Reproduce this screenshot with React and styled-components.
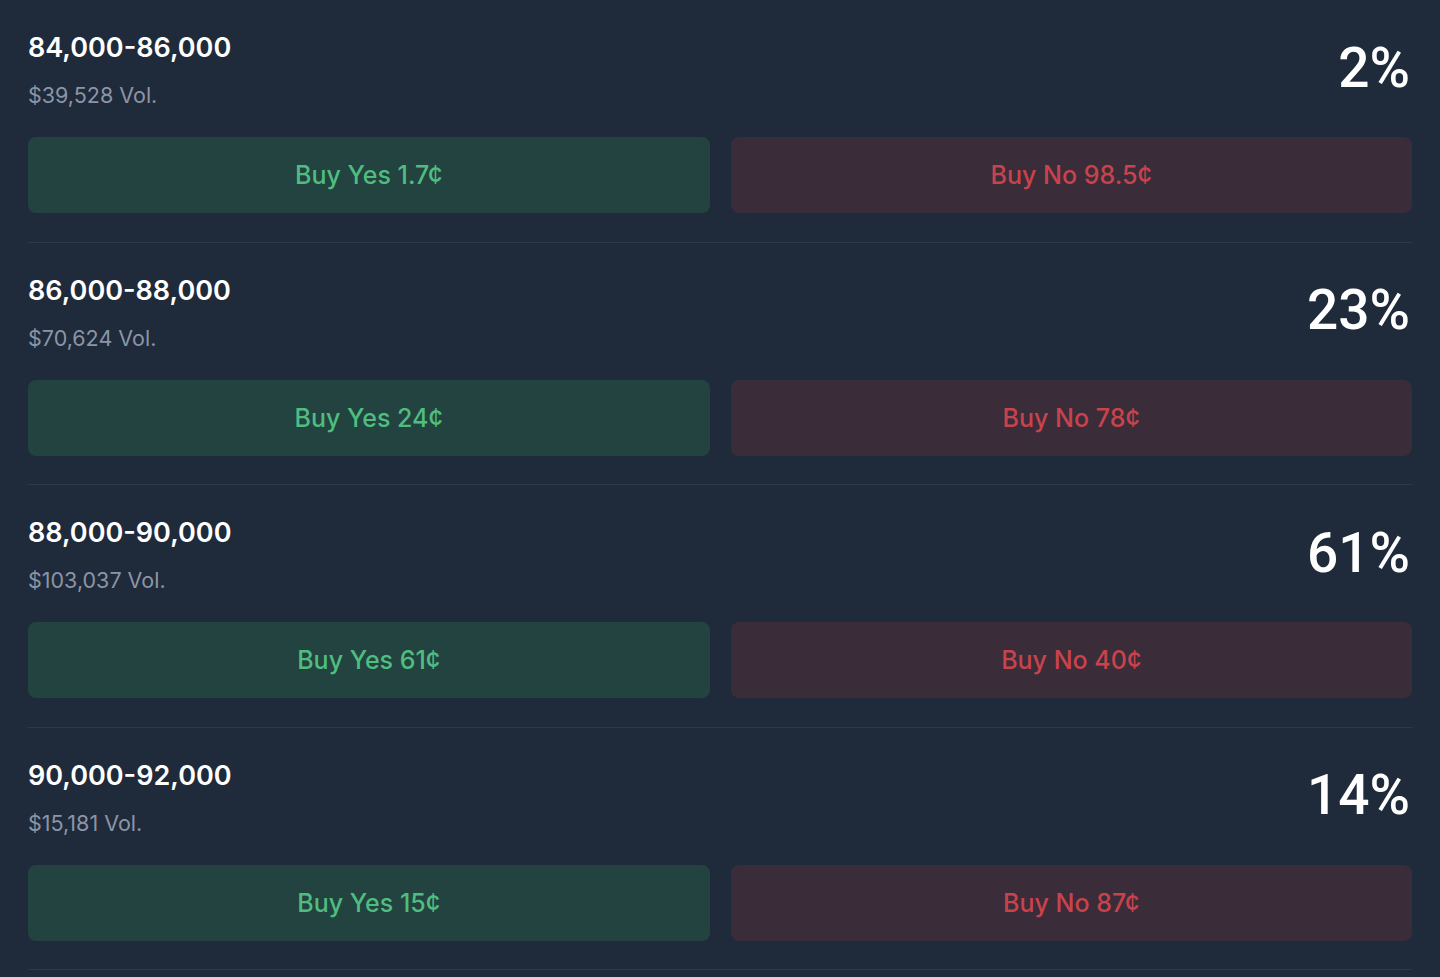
import React from "react";
import styled, { createGlobalStyle } from "styled-components";

const GlobalStyle = createGlobalStyle`
  html, body {
    margin: 0;
    padding: 0;
    background: #1f2a3b;
    font-family: Inter, "Liberation Sans", sans-serif;
  }
`;

const markets = [
  { range: "84,000-86,000", vol: "$39,528", pct: "2%", yes: "1.7¢", no: "98.5¢" },
  { range: "86,000-88,000", vol: "$70,624", pct: "23%", yes: "24¢", no: "78¢" },
  { range: "88,000-90,000", vol: "$103,037", pct: "61%", yes: "61¢", no: "40¢" },
  { range: "90,000-92,000", vol: "$15,181", pct: "14%", yes: "15¢", no: "87¢" },
];

export default function App() {
  return (
    <Page>
      <GlobalStyle />
      {markets.map(m => (
        <Row key={m.range}>
          <Header>
            <div>
              <Title>{m.range}</Title>
              <Volume>{m.vol} Vol.</Volume>
            </div>
            <Percent>{m.pct}</Percent>
          </Header>
          <Buttons>
            <BuyButton side="yes">Buy Yes {m.yes}</BuyButton>
            <BuyButton side="no">Buy No {m.no}</BuyButton>
          </Buttons>
        </Row>
      ))}
    </Page>
  );
}

const Page = styled.div`
  width: 1440px;
  min-height: 977px;
  padding: 0 28px;
  box-sizing: border-box;
  background: #1f2a3b;
`;

const Row = styled.div`
  padding: 32px 0 28.5px;
  border-bottom: 1px solid #2d384a;
`;

const Header = styled.div`
  display: flex;
  justify-content: space-between;
  align-items: center;
  height: 75px;
`;

const Title = styled.div`
  color: #ffffff;
  font-size: 27px;
  line-height: 32px;
  font-weight: 600;
`;

const Volume = styled.div`
  margin-top: 19px;
  color: #8b95a5;
  font-size: 21.5px;
  line-height: 24px;
`;

const Percent = styled.div`
  color: #ffffff;
  font-family: Roboto, Inter, sans-serif;
  font-size: 55px;
  line-height: 60px;
  font-weight: 500;
  margin-top: -4px;
  margin-right: 2px;
`;

const Buttons = styled.div`
  display: grid;
  grid-template-columns: 1fr 1fr;
  gap: 21px;
  margin-top: 30px;
`;

const BuyButton = styled.button`
  height: 76px;
  border: none;
  border-radius: 8px;
  font-family: inherit;
  font-size: 25px;
  font-weight: 500;
  cursor: pointer;
  background: ${p => (p.side === "yes" ? "#22433f" : "#3b2c3a")};
  color: ${p => (p.side === "yes" ? "#4fbd7f" : "#c8434b")};
`;
